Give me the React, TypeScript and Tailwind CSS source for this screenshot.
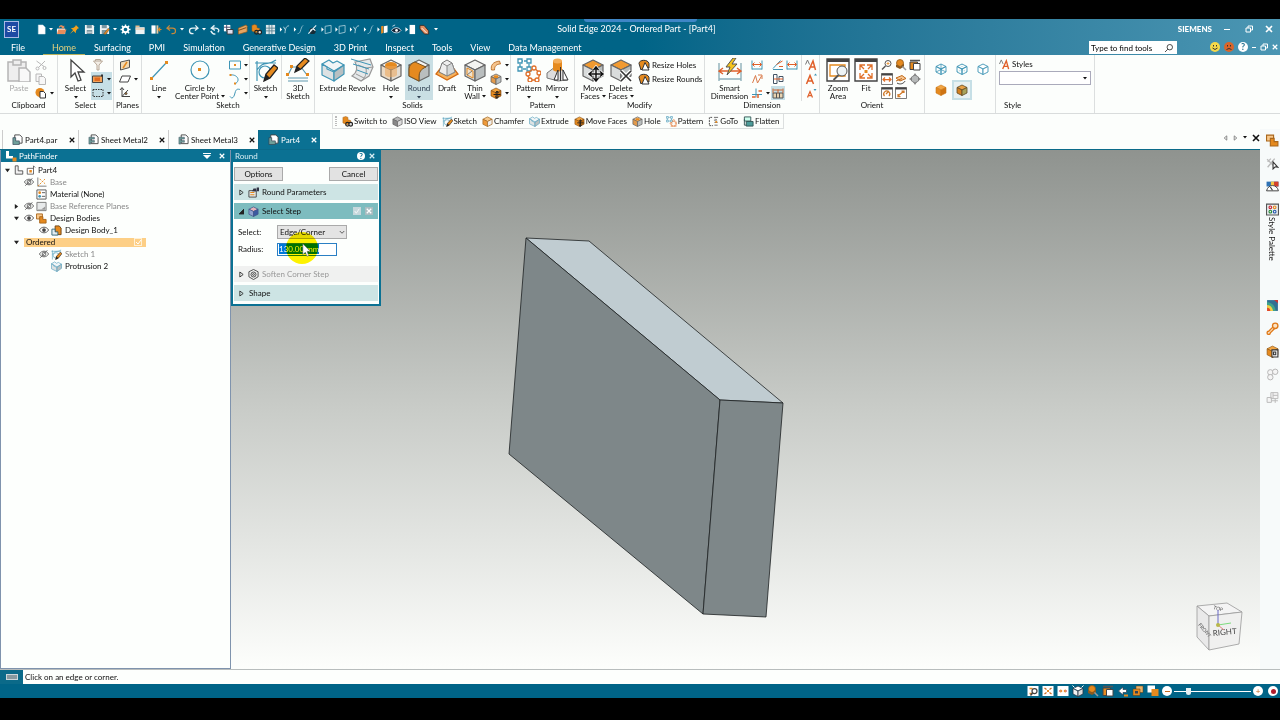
import { useState } from "react";
import type { ReactNode } from "react";

const O = "#e58a1f";
const T = "#3f95b5";
const G = "#555";

function Box({ t = "#f4f4f2", l = "#d9dcdc", r = "#b9bebe", s = "#666", w = 1.2 }: { t?: string; l?: string; r?: string; s?: string; w?: number }) {
  return (
    <g stroke={s} strokeWidth={w} strokeLinejoin="round">
      <path d="M12 2 22 7 12 12 2 7z" fill={t} />
      <path d="M2 7 12 12V23L2 18z" fill={l} />
      <path d="M22 7 12 12V23L22 18z" fill={r} />
    </g>
  );
}

const lens = <><circle cx="14" cy="9" r="6" fill="#fff" stroke={G} strokeWidth="2" /><path d="M11 9h6M14 6v6" stroke={O} strokeWidth="1.500" /><path d="M9 14 2 21" stroke={G} strokeWidth="3" /></>;
const pencil = <><path d="M10 23l2-7 8-9 4 3-8 10z" fill={O} stroke="#222" strokeWidth="1.300" /><path d="M10 23l2-7 4 4z" fill="#222" /></>;
const frame = <path d="M1 1h22v22H1z" fill="#fff" stroke="#444" strokeWidth="1.4" />;

// every drawing sits on a 24 unit square
const icons: Record<string, ReactNode> = {
  paste: <g fill="#eee" stroke="#b5b5b5" strokeWidth="1.5"><path d="M1 4h18v19H1z" /><path d="M6 2h8v5H6z" /><path d="M12 10h7l4 4v10H12z" fill="#f8f8f8" /></g>,
  cut: <g fill="none" stroke="#b8b8b8" strokeWidth="2"><path d="M3 4 18 15M20 4 7 17" /><circle cx="5" cy="19" r="3" /><circle cx="19" cy="18" r="3" /></g>,
  copy: <g fill="#f7f7f7" stroke="#b8b8b8" strokeWidth="2"><path d="M2 2h11v15H2z" /><path d="M8 7h9l4 4v12H8z" /></g>,
  clip: <><circle cx="10" cy="11" r="9" fill={O} /><path d="M10 9h7l4 4v9H10z" fill="#fff" stroke="#333" strokeWidth="2" /></>,
  arrow: <path d="M7 2v17l4-4 3 8 3-1-3-8h6z" fill="#fff" stroke="#444" strokeWidth="1.3" />,
  filter: <path d="M3 4h18l-7 8v10h-4V12zM7 4V1h10v3" fill="#f3eee6" stroke="#b7a898" strokeWidth="2" />,
  boxsel: <><path d="M1 6h20v13H1z" fill="#f3a35a" stroke="#444" strokeWidth="2" /><path d="M5 9h11v7H5z" fill="#e06a20" /><path d="M18 3h4v4h-4z" fill="#333" /></>,
  dashed: <path d="M2 5h20v14H2z" fill="none" stroke="#333" strokeWidth="2" strokeDasharray="3 2" />,
  plane: <><path d="M3 6l18-4v15L3 22z" fill="#f1d9b3" stroke="#555" strokeWidth="2" /><path d="M8 18l8-12" stroke={O} strokeWidth="3" /></>,
  plane2: <path d="M6 6h17l-5 12H1z" fill="#fff" stroke="#444" strokeWidth="2" />,
  axes: <g fill="none" stroke="#444" strokeWidth="2"><path d="M6 2v17h16M6 19 18 6M2 6l4-5 4 5" /><circle cx="14" cy="13" r="2" fill={O} /></g>,
  line: <><path d="M4 21 20 4" stroke={T} strokeWidth="1.2" /><path d="M3 19h3v3H3zM18 3h3v3h-3z" fill={O} /></>,
  circle: <><circle cx="12" cy="12" r="9" fill="none" stroke={T} strokeWidth="1.2" /><path d="M10 10h3v3h-3z" fill={O} /></>,
  rect: <><path d="M1 4h22v16H1z" fill="none" stroke={T} strokeWidth="2" /><path d="M10 10h4v4h-4z" fill={O} /></>,
  arc: <><path d="M3 4c12-2 22 10 9 18" fill="none" stroke={T} strokeWidth="2" /><path d="M1 2h4v4H1zM10 19h4v4h-4z" fill={O} /></>,
  curve: <path d="M2 19c4 6 8 2 10-7s6-8 10-7" fill="none" stroke={T} strokeWidth="2" />,
  sketch: <><path d="M3 23V3m-2 2h21M3 12C9 2 14 8 22 2" fill="none" stroke={T} strokeWidth="1.2" /><circle cx="11" cy="14" r="6" fill="none" stroke={T} strokeWidth="1.2" />{pencil}</>,
  sketch3d: <><path d="M2 17 6 9h9l6 8M2 23h20M2 20h20" fill="none" stroke="#5e98ad" strokeWidth="1.2" /><path d="M0 15h3v3H0zM4 7h3v3H4zM20 15h3v3h-3z" fill={O} /><path d="M9 14l2-6L19 0l4 3-8 8z" fill={O} stroke="#222" strokeWidth="1.2" /><path d="M9 14l2-6 4 3z" fill="#222" /></>,
  extrude: <g stroke={T} strokeWidth="1.2" strokeLinejoin="round"><path d="M1 6 8 2l4 3 4-2 7 4-10 6z" fill="#f1f5f6" /><path d="M1 6l5 3v2l7 3v9L1 17z" fill="#dde2e3" /><path d="M13 14l10-7v9l-10 7z" fill="#b8c0c2" /></g>,
  revolve: <><path d="M5 4 20 1l3 8-4 9-8 5-9-5c5-3 6-9 3-14z" fill="#e6e9ea" stroke="#999" strokeWidth="1.2" /><path d="M11 23c4-3 6-7 5-13L8 7M16 10l7-1M6 16l8 4" stroke="#999" fill="none" /><path d="M1 1l20 6M3 6l16 5M7 12l11 4" stroke={T} fill="none" /></>,
  hole: <><Box r="#e3dcd2" l="#ead9c4" /><ellipse cx="12" cy="7.5" rx="6" ry="3.4" fill={O} /><path d="M6 8v9c2 3 10 3 12 0V8" fill="#eda65a" opacity=".55" /></>,
  round: <><Box /><path d="M2 12C2 7 5 5 8 4l11 5c-5 2-7 5-7 10v4L2 18z" fill={O} stroke="#7a5420" /></>,
  draft: <><path d="M1 16l11 6 11-6-4-5H5z" fill="#f6b25d" stroke="#d46a10" strokeWidth="1.4" /><path d="M7 5l5-3 5 3 3 9-8 4-8-4z" fill="#eee" stroke="#777" /><path d="M7 5l5 3v10l8-4-3-9-5 3" stroke="#888" fill="#d5d8d8" /></>,
  thin: <><Box /><path d="M4 10l6 3v7l-6-3z" fill="#f0e3cf" stroke={O} /><path d="M4 17l5-4" stroke="#777" /></>,
  swept: <path d="M3 22c-2-9 2-16 16-18l2 6c-8 0-12 4-12 12z" fill="#f6c48c" stroke="#b0621a" strokeWidth="1.6" />,
  boxo: <><Box w={1.6} s="#666" t="#f0c694" l="#e39a4a" /><path d="M8 5h8v5H8z" fill={O} /></>,
  gizmo: <><Box t="#f3a33c" l={O} r="#c36f10" s="#7a4510" /><path d="M14 9v13M7 15h14M11 12l3-4 3 4M11 19l3 4 3-4" stroke="#222" strokeWidth="2" fill="none" /></>,
  pattern: <g fill="none" strokeWidth="1.3"><path d="M3 3h9v8H3z" stroke={T} strokeDasharray="3 1" /><path d="M1 1h4v4H1zM10 1h4v4h-4zM1 9h4v4H1zM10 9h4v4h-4z" stroke={T} fill="#fff" /><path d="M17 10l6 5-2 7h-8l-3-6z" stroke="#e0702a" /><g fill="#fff" stroke="#e0702a"><circle cx="17" cy="10" r="2" /><circle cx="22" cy="15" r="2" /><circle cx="20" cy="22" r="2" /><circle cx="13" cy="22" r="2" /><circle cx="11" cy="16" r="2" /></g></g>,
  mirror: <><path d="M2 15l8-6 8 3 4 10-9 1-11-3z" fill="#ddd" stroke="#777" /><path d="M8 3v9c2 2 7 2 9 0V3z" fill={O} /><ellipse cx="12.500" cy="3" rx="4.500" ry="2.500" fill="#f4ae5b" /><path d="M15.500 9v14M13 12 9 22h4zM18 12l5 10h-5z" fill="#fff" stroke="#333" /></>,
  move: <><Box t="#f19a31" /><path d="M15 9v14M8 16h14M12.500 12 15 9l2.500 3M12.500 20l2.500 3 2.500-3M11 13.500 8 16l3 2.500M19 13.500l3 2.500-3 2.500" stroke="#fff" strokeWidth="3" fill="none" /><path d="M15 9v14M8 16h14M12.500 12 15 9l2.500 3M12.500 20l2.500 3 2.500-3M11 13.500 8 16l3 2.500M19 13.500l3 2.500-3 2.500" stroke="#111" strokeWidth="1.5" fill="none" /></>,
  del: <><Box t="#f19a31" /><path d="M12 13l10 10M22 13 12 23" stroke="#fff" strokeWidth="4" /><path d="M12 13l10 10M22 13 12 23" stroke="#333" strokeWidth="1.6" /></>,
  resizeh: <><path d="M2 9C2 1 20 0 22 9v9l-8-4-8 8z" fill={O} stroke="#333" strokeWidth="2" /><path d="M14 7l8 15H8z" fill="#fff" stroke="#333" strokeWidth="2" /></>,
  smart: <><path d="M1 5v18M23 5v18M1 21h22" stroke="#8fb0ba" strokeWidth="1.4" /><path d="M2 13h20M5 10l-4 3 4 3M19 10l4 3-4 3" stroke="#e0602a" fill="none" strokeWidth="1.4" /><path d="M15 0 8 9h4l-3 8 10-11h-5l4-6z" fill="#f7c51e" stroke="#555" /></>,
  dim: <><path d="M2 3v18M22 3v18M2 20h20" stroke={T} strokeWidth="2" /><path d="M3 11h18M7 7l-4 4 4 4M17 7l4 4-4 4" stroke="#e0602a" fill="none" strokeWidth="2" /></>,
  angle: <><path d="M2 19 17 3M2 21h20" stroke={T} strokeWidth="2" /><path d="M9 11l12-7M14 15h8" fill="none" stroke="#e0602a" strokeWidth="2" /></>,
  dims2: <path d="M3 20 9 5l4 15 8-14M14 4h8v8" fill="none" stroke="#d97a4a" strokeWidth="2" />,
  coord: <><path d="M2 15h20M10 3v18" stroke={T} strokeWidth="2" /><path d="M2 20h7M15 8h7M14 14v8" stroke="#e0602a" strokeWidth="3" /></>,
  symd: <><path d="M3 3h7v18H3zM14 7h8v10h-8z" fill="#fff" stroke="#456" strokeWidth="2" /><path d="M4 12h18" stroke="#e0602a" strokeWidth="2" /></>,
  grid: <><path d="M2 12h20v10H2z" fill="#e8d3b0" stroke="#555" strokeWidth="2" /><path d="M2 3v9M22 3v9M12 5v7M3 6h18" stroke="#c8602a" strokeWidth="2" /><path d="M9 12v10M15 12v10" stroke="#555" strokeWidth="2" /></>,
  aa: <g fill="none" stroke="#e0602a" strokeWidth="3"><path d="M8 22l8-18 5 18M11 16h9" /><path d="M1 11 5 2l4 9" strokeWidth="2" stroke="#777" /></g>,
  a1: <><path d="M3 22 10 5l7 17M6 16h9" fill="none" stroke="#e0602a" strokeWidth="3" /><path d="M18 5l3-4 3 4z" fill={T} /></>,
  a2: <><path d="M5 21l5-12 5 12M7 17h6" fill="none" stroke="#e0602a" strokeWidth="2.500" /><path d="M17 4h6l-3 4z" fill={T} /></>,
  zoomarea: <>{frame}<path d="M1 2.500h22" stroke="#444" strokeWidth="3" /><path d="M4 7h15v11H4z" fill="none" stroke={O} strokeWidth="1.300" /><circle cx="16" cy="13" r="5" fill="#eef4f6" stroke="#555" /><path d="M12.500 17l-5 5" stroke="#555" strokeWidth="1.800" /></>,
  fit: <>{frame}<path d="M1 2.500h22" stroke="#444" strokeWidth="3" /><path d="M6 12V7h5M18 12V7h-5M6 15v5h5M18 15v5h-5M6 7l4 4M18 7l-4 4M6 20l4-4M18 20l-4-4" fill="none" stroke="#e0702a" strokeWidth="1.300" /><path d="M10.500 12h3v3h-3z" fill={O} /></>,
  lens,
  fitsmall: <>{frame}<path d="M1 3h22" stroke="#444" strokeWidth="4" /><path d="M4 13h16M8 9l-4 4 4 4M16 9l4 4-4 4" stroke="#e0702a" strokeWidth="2.500" fill="none" /></>,
  rotwin: <>{frame}<path d="M1 3h22" stroke="#444" strokeWidth="4" /><path d="M7 18a6 6 0 1 1 9 0M10 14l6-6" fill="none" stroke="#d07a2a" strokeWidth="2.500" /></>,
  diag: <>{frame}<path d="M1 3h22" stroke="#444" strokeWidth="4" /><path d="M6 18 18 8M6 14v5h5M13 8h5v4" fill="none" stroke="#d07a2a" strokeWidth="2.500" /></>,
  boxes: <><circle cx="10" cy="8" r="7" fill={O} stroke="#8d5517" strokeWidth="1.500" /><path d="M2 11l9 4 7-6v6l-8 5-8-4z" fill="#8a5a20" /><path d="M15 15l7 7" stroke="#999" strokeWidth="3" /></>,
  pages: <><path d="M2 6h15v15H2z" fill={O} stroke="#444" strokeWidth="2" /><path d="M9 9h13v13H9z" fill="#fff" stroke="#444" strokeWidth="2" /><path d="M2 3h20" stroke="#555" strokeWidth="3" /></>,
  pan: <><path d="M2 10l12-5 8 6-12 5zM2 16l12-5" fill="#f7c794" stroke="#c06a1c" strokeWidth="2" /><path d="M4 20c6 4 14 1 16-4" fill="none" stroke="#444" strokeWidth="2" /></>,
  cross: <><path d="M12 0l4 6h-8zM12 24l4-6h-8zM0 12l6-4v8zM24 12l-6-4v8z" fill="#888" /><path d="M12 4l7 4v8l-7 4-7-4V8z" fill="#b5b8b8" stroke="#777" strokeWidth="1.500" /></>,
  wire: <><Box t="none" l="none" r="none" s={T} w={1.8} /><path d="M2 18l10-5 10 5M12 2v11" stroke={T} strokeWidth="1.600" /></>,
  wire1: <><Box t="none" l="none" r="none" s={T} w={1.8} /><path d="M2 18l10-5 10 5M12 2v11" stroke={T} strokeDasharray="2 2" /></>,
  wire2: <Box t="#fff" l="#fff" r="#fff" s={T} w={1.8} />,
  solid: <Box t="#f2a543" l={O} r="#cf7412" s="#c97717" />,
  shaded: <Box t="#e8a045" l="#d48020" r="#a9a35a" s="#5f4a24" w={1.6} />,
  chamfer: <Box t="#f6c88a" l="#ef9a3a" r="#eee" s="#a56a24" w={1.6} />,
  grey: <Box t="#bbb" l="#888" r="#ddd" s="#666" w={1.6} />,
  select: <Box t="#e6b3ba" l="#8fa2cf" r="#3b5aa0" s="#43568a" w={1.6} />,
  goto: <><path d="M9 3H3v18h8" fill="none" stroke="#444" strokeWidth="2" strokeDasharray="4 2" /><path d="M13 3h9M13 9h6l-3-3M14 14h7M14 20h7" stroke="#666" strokeWidth="2" /><path d="M16 11h4v4h-4z" fill={O} /></>,
  flatten: <g stroke="#355" strokeWidth="2"><path d="M3 2h14v9H3z" fill="#cfe" /><path d="M7 12h15v10H7z" fill="#4d9d9a" /><path d="M3 7v13h4" fill="none" /></g>,
  doc: <path d="M5 2h10l5 5v15H5z" fill="#fff" stroke="#d7e3e8" />,
  open: <><path d="M2 10h18v12H2z" fill="#fff" /><path d="M5 12h18l-4 10H2z" fill="#e78d5c" /><path d="M6 7C8 1 14 2 16 5l2-2v7h-7l2-3c-3-2-5-1-5 1z" fill="#e78d5c" /></>,
  pin: <path d="M15 2l7 7-3 1-4 5v5l-5-5-8 7 7-9-5-4 6-1 4-3z" fill="#f3a11c" />,
  save: <><path d="M2 2h18l2 3v17H2z" fill="#eef3f4" /><path d="M6 2h11v7H6zM6 13h12v9H6z" fill="#7a97a2" /><path d="M7 15h10v1H7zM7 18h10v1H7z" fill="#fff" /></>,
  saveas: <><path d="M2 2h18l2 3v17H2z" fill="#eef3f4" /><path d="M6 2h11v7H6zM6 13h12v9H6z" fill="#7a97a2" /><path d="M10 22 20 9l3 3-9 11z" fill={O} stroke="#543" /></>,
  gear: <g stroke="#fff" fill="none"><circle cx="12" cy="12" r="6" strokeWidth="4" /><path d="M12 1v5M12 18v5M1 12h5M18 12h5M4 4l4 4M16 16l4 4M20 4l-4 4M8 16l-4 4" strokeWidth="3" /></g>,
  win: <><path d="M1 7h20v15H1z" fill="#eef3f4" /><path d="M1 3h9v4H1zM1 10h20v2H1z" fill="#e8b98a" /></>,
  panel: <><path d="M1 3h9v18H1z" fill="#fff" /><path d="M12 3h4v18h-4z" fill="#e9c59a" /><path d="M23 12h-6m3-4-4 4 4 4" stroke={O} strokeWidth="2.500" fill="none" /></>,
  undo: <path d="M8 3 2 9l7 5M3 9h11c9 0 9 12 0 12h-2" fill="none" stroke="#c98a3b" strokeWidth="2.500" />,
  redo: <path d="M16 3l6 6-7 5M21 9H10C1 9 1 21 10 21h2" fill="none" stroke="#e8f2f5" strokeWidth="2.800" />,
  sync: <path d="M12 3 5 9l8 5M6 9h8c8 0 9 6 5 9M4 15c2 5 6 7 10 7" fill="none" stroke="#dfeef3" strokeWidth="3" />,
  table: <><path d="M2 2h14v14H2z" fill="#fff" /><path d="M2 7h14M8 2v14" stroke="#446" strokeWidth="2" /><path d="M9 12h13v10H9z" fill="#dde" stroke="#333" strokeWidth="2" /></>,
  sheet: <><path d="M3 9l17-7 2 3v12L5 22H3z" fill="#e5a663" stroke="#a45c12" strokeWidth="1.500" /><path d="M3 14 20 8" stroke="#7c4510" strokeWidth="2" /></>,
  link: <><path d="M2 3l6-2 5 2v5l6 2v6l-8 3-9-4z" fill={O} stroke="#9a5a18" /><circle cx="12" cy="18" r="4" fill="none" stroke="#222" strokeWidth="2.500" /><circle cx="19" cy="18" r="4" fill="#ddd" stroke="#222" strokeWidth="2.500" /></>,
  cells: <><path d="M2 2h20v20H2z" fill="#dfe9ec" /><path d="M2 9h20M2 15h20M9 2v20M15 2v20" stroke="#5b8494" strokeWidth="2" /></>,
  tri: <><path d="M2 7l5 5-5 5z" fill="#fff" /><path d="M22 4c-6 0-8 5-9 16M10 6l3 6" stroke="#cfe3ea" strokeWidth="1.800" fill="none" /></>,
  slope: <><path d="M2 7l5 5-5 5z" fill="#fff" /><path d="M22 3c-3 2-5 9-6 13-1 3-3 5-6 5" stroke="#9cc6d4" strokeWidth="1.800" fill="none" /></>,
  plane3: <><path d="M1 7l5 5-5 5z" fill="#fff" /><path d="M9 5l13-2v15L9 21z" fill="none" stroke="#9cc6d4" strokeWidth="2" /></>,
  planeo: <><path d="M1 7l5 5-5 5z" fill="#fff" /><path d="M9 5l5-1v15l-5 2z" fill={O} /><path d="M15 5l8-2v15l-8 2z" fill="#fff" /></>,
  slash: <><circle cx="12" cy="15" r="7" fill="#162b36" /><path d="M3 21 20 3M7 15c3-5 9-5 11 0" stroke="#dfeef3" strokeWidth="2.500" fill="none" /></>,
  eyed: <><path d="M1 14c5-8 16-8 21 0-5 7-16 7-21 0z" fill="#123" stroke="#cde" strokeWidth="2" /><circle cx="12" cy="14" r="3" fill="#fff" /><path d="M3 5l6-3" stroke="#cde" strokeWidth="2" /></>,
  page: <><path d="M1 7l6 5-6 5z" fill="#fff" /><path d="M10 2h12v20H10z" fill="#fff" /></>,
  fold: <><path d="M2 3h9l10 12v7h-9L2 11z" fill="#e28f62" stroke="#40302a" strokeWidth="2" /><path d="M6 9l11 11" stroke="#fff" strokeWidth="2" /></>,
  partdoc: <><path d="M6 2h11l5 5v13H6z" fill="#fff" stroke="#444" strokeWidth="2" /><path d="M2 8h6v7h8v8H2z" fill="#6f9f9a" stroke="#345" strokeWidth="1.500" /></>,
  sheetdoc: <><path d="M7 2h10l5 5v14H7z" fill="#fff" stroke="#444" strokeWidth="2" /><path d="M2 7h12v4H6v3h8v4H6v4H2z" fill="#6f9f9a" stroke="#345" /></>,
  lpart: <path d="M3 2h7v12h11v8H3z" fill="#f2f2f2" stroke="#444" strokeWidth="2" />,
  docup: <><path d="M3 8h15v14H3z" fill="#fff" stroke="#555" strokeWidth="2" /><path d="M8 12h6v6H8z" fill={O} /><path d="M18 9V2l4 4" stroke="#555" strokeWidth="2" fill="none" /></>,
  pathicon: <><path d="M2 2h6v10h8v5H2z" fill="#fff" /><path d="M15 15h8v8h-8z" fill={O} /></>,
  eye: <><path d="M1 12c5-9 17-9 22 0-5 9-17 9-22 0z" fill="#fff" stroke="#444" strokeWidth="2" /><circle cx="12" cy="12" r="4.500" fill="#444" /></>,
  eyeoff: <g fill="none" stroke="#555" strokeWidth="2"><path d="M1 12c5-9 17-9 22 0-5 9-17 9-22 0zM3 21 20 3" /><circle cx="12" cy="12" r="4.500" /></g>,
  base: <><path d="M4 1v19h19" fill="none" stroke="#777" strokeWidth="2" /><path d="M4 20 20 4M8 4l5 5M17 12l4 4" stroke={O} strokeWidth="2" strokeDasharray="4 2" /></>,
  material: <><path d="M2 2h20v20H2z" fill="#fff" stroke="#555" strokeWidth="2" /><circle cx="8" cy="8" r="3" fill={O} /><circle cx="8" cy="16" r="3" fill={T} /><path d="M13 8h7M13 16h7" stroke="#555" strokeWidth="2" /></>,
  refplane: <><path d="M2 3h20v18H2z" fill="#e7eaea" stroke="#777" strokeWidth="2" /><path d="M4 18h8l8-6v7H4z" fill="#999" /></>,
  bodies: <><path d="M1 2h13v11H1z" fill="#f7c78a" stroke="#a9661b" strokeWidth="2" /><path d="M8 8h7v6h7v8H8z" fill={O} stroke="#a9661b" strokeWidth="2" /></>,
  body: <><path d="M9 2h9l4 5v14H9z" fill={O} stroke="#6c4312" strokeWidth="2" /><path d="M2 9h7v6h6v7H2z" fill="#e3edf2" stroke="#367" strokeWidth="2" /></>,
  params: <><path d="M2 8h16v14H2z" fill="#e5eaea" stroke="#444" strokeWidth="2" /><path d="M5 12h9M5 17h9" stroke={O} strokeWidth="2.500" /><path d="M9 9l3-6h6v7zM19 1h5v8h-5z" fill="#334" /></>,
  soften: <g fill="none" stroke="#333" strokeWidth="1.800"><path d="M12 1l10 5v11l-10 6-10-6V6z" /><circle cx="12" cy="12" r="5.500" /><circle cx="12" cy="12" r="2" /></g>,
  tools: <g fill="none" stroke="#bbb" strokeWidth="2.500"><path d="M2 4l14 14M16 3 3 19M3 9l6-6" /><path d="M13 9v13l4-4 5 1z" fill="#fff" stroke="#333" strokeWidth="2" /></g>,
  gauge: <><path d="M1 3h22v9H1z" fill="#2f72b5" /><path d="M9 3h6v9H9z" fill="#f3c343" /><path d="M15 3h8v9h-8z" fill="#d6402a" /><path d="M1 20c3-13 19-13 22 0z" fill="#fff" stroke="#444" strokeWidth="1.800" /><path d="M12 19 8 13" stroke="#333" strokeWidth="2" /></>,
  palette: <><path d="M1 2h22v20H1z" fill="#e9eef0" stroke="#555" strokeWidth="2" /><g fill="none" strokeWidth="2"><circle cx="8" cy="8" r="2.500" stroke="#c23" /><circle cx="16" cy="8" r="2.500" stroke={O} /><circle cx="8" cy="16" r="2.500" stroke="#283" /><circle cx="16" cy="16" r="2.500" stroke="#25a" /></g></>,
  rainbow: <><path d="M2 2h20v20H2z" fill="#2f6f94" /><path d="M2 6c9 0 15 7 16 16H2z" fill="#3da38a" /><path d="M2 11c6 0 10 5 11 11H2z" fill="#f3cf45" /><path d="M2 16c4 0 6 3 6 6H2z" fill="#e24a2a" /><path d="M15 2h7v6z" fill="#c33" /></>,
  wrench: <><path d="M13 9 5 17a3 3 0 1 0 3 3l8-8" fill="#fbe3c4" stroke="#e07a1a" strokeWidth="2.500" /><circle cx="17" cy="7" r="5" fill="#fbe3c4" stroke="#e07a1a" strokeWidth="2.500" /></>,
  boxdoc: <><Box t="#f2a543" l={O} r="#cf7412" s="#8d5517" /><path d="M11 9h11v13H11z" fill="#fff" stroke="#333" strokeWidth="2" /><path d="M14 13h4v5h-4z" fill="none" stroke="#333" strokeWidth="2" /></>,
  circles: <g fill="#f5f5f5" stroke="#b5b5b5" strokeWidth="1.800"><circle cx="8" cy="8" r="5" /><circle cx="17" cy="7" r="5" /><circle cx="8" cy="17" r="5" /></g>,
  greydoc: <path d="M2 12h8v9H2zM9 3h13v11H9zM13 3v11M13 8h9M17 14v8M10 18h12" fill="#f5f5f5" stroke="#bbb" strokeWidth="1.800" />,
  wlens: <><path d="M1 2h22v20H1z" fill="#fff" /><path d="M5 7h6M5 17h6" stroke={O} strokeWidth="3" /><circle cx="15" cy="12" r="5" fill="#fff" stroke="#444" strokeWidth="2.500" /><path d="M11 16l-4 5" stroke="#444" strokeWidth="3" /></>,
  wfit: <><path d="M1 2h22v20H1z" fill="#fff" /><path d="M5 6l4 3M19 6l-4 3M5 18l4-3M19 18l-4-3" stroke="#c96a20" strokeWidth="2.500" /><path d="M10 10h4v4h-4z" fill={O} /></>,
  wdim: <><path d="M1 2h22v20H1z" fill="#fff" /><path d="M4 12h5M15 12h5" stroke="#c23" strokeWidth="2" /><path d="M7 8l4 4-4 4zM17 8l-4 4 4 4z" fill={O} /></>,
  wcube: <><Box t="#fff" l="#f2f2f2" r="#ddd" s="#234" w={1.6} /><path d="M1 1l4 4M23 1l-4 4" stroke="#fff" strokeWidth="2" /></>,
  back: <><path d="M12 4 3 12l9 8v-5h7V9h-7z" fill="#fff" stroke="#345" strokeWidth="1.500" /><path d="M14 21h8" stroke={O} strokeWidth="4" /></>,
  stack1: <><path d="M8 2h14v13H8z" fill="#e9b26a" stroke="#5f3b10" /><path d="M2 8h14v13H2z" fill={O} stroke="#5f3b10" /><path d="M6 12h6v5H6z" fill="#345" /></>,
  stack2: <><path d="M1 1h15v14H1z" fill="#fff" /><path d="M9 8h14v14H9z" fill={O} /></>,
};

function Ico({ n, className = "size-[11px]" }: { n: string; className?: string }) {
  return <svg viewBox="0 0 24 24" className={`shrink-0 ${className}`} fill="none" aria-hidden="true">{icons[n]}</svg>;
}

function Caret({ className = "" }: { className?: string }) {
  return <svg viewBox="0 0 4 3" className={`h-[3px] w-1 shrink-0 ${className}`} aria-hidden="true"><path d="M0 0h4L2 2.500z" fill="currentColor" /></svg>;
}

function Close({ className = "size-[6px]" }: { className?: string }) {
  return <svg viewBox="0 0 8 8" className={`shrink-0 ${className}`} aria-hidden="true"><path d="M1 1l6 6M7 1 1 7" stroke="currentColor" strokeWidth="1.600" /></svg>;
}

function Restore() {
  return <svg viewBox="0 0 8 8" className="size-2" fill="none" stroke="currentColor" aria-hidden="true"><path d="M1 3h4.500v4H1zM3 3V1h4.500v4H6" /></svg>;
}

interface BigProps { icon: string; label: string; label2?: string; caret?: boolean; inline?: boolean; width?: string; active?: boolean; muted?: boolean }

function Big({ icon, label, label2, caret, inline, width = "w-7", active, muted }: BigProps) {
  return (
    <button type="button" className={`flex h-[45px] shrink-0 flex-col items-center pt-[3px] ${width} ${active ? "bg-[#c9dfe4] text-[#345]" : ""} ${muted ? "text-[#aaa]" : ""}`}>
      <Ico n={icon} className="size-6" />
      <span className="mt-[2px] whitespace-nowrap leading-2">{label}</span>
      {label2 && <span className="flex items-center gap-[2px] whitespace-nowrap leading-2">{label2}{inline && <Caret />}</span>}
      {caret && <Caret className="mt-1" />}
    </button>
  );
}

function Small({ icon, caret, active, label, title }: { icon: string; caret?: boolean; active?: boolean; label?: string; title?: string }) {
  return (
    <button type="button" aria-label={label ?? title ?? icon} className={`flex h-[14px] items-center gap-[2px] whitespace-nowrap px-[1px] ${active ? "bg-[#c6dfe6]" : ""}`}>
      <Ico n={icon} className="size-3" />
      {label}
      {caret && <Caret className="ml-[1px]" />}
    </button>
  );
}

function Group({ name, width, children }: { name: string; width: string; children: ReactNode }) {
  return (
    <section className={`flex shrink-0 flex-col border-r border-[#dcdfdf] ${width}`}>
      <div className="flex h-[46px]">{children}</div>
      <h2 className="text-center leading-2">{name}</h2>
    </section>
  );
}

const Col = ({ children, className = "" }: { children: ReactNode; className?: string }) => <div className={`flex flex-col items-start pt-[3px] ${className}`}>{children}</div>;

const quick: [string, string][] = [
  ["doc", "w-3"], ["caret", "w-2"], ["open", "w-3"], ["pin", "w-[14px]"], ["save", "w-4"], ["saveas", "w-[14px]"], ["caret", "w-2"], ["gear", "w-3"],
  ["win", "w-[18px]"], ["panel", "w-[14px]"], ["undo", "w-4"], ["caret", "w-[6px]"], ["redo", "w-4"], ["caret", "w-[6px]"], ["sync", "w-[14px]"],
  ["table", "w-[14px]"], ["sheet", "w-[14px]"], ["link", "w-[14px]"], ["cells", "w-[14px]"], ["tri", "w-[14px]"], ["slope", "w-[14px]"], ["slash", "w-[14px]"],
  ["plane3", "w-[14px]"], ["plane3", "w-[14px]"], ["tri", "w-[14px]"], ["slope", "w-[14px]"], ["planeo", "w-[14px]"], ["eyed", "w-[14px]"], ["page", "w-[14px]"], ["fold", "w-[14px]"], ["caret", "w-[10px]"],
];

const menus = ["Home", "Surfacing", "PMI", "Simulation", "Generative Design", "3D Print", "Inspect", "Tools", "View", "Data Management"];

function Header() {
  return (
    <header className="relative h-9 shrink-0 bg-linear-to-r from-[#006487] from-50% to-[#4b96b3] text-[9px] text-white">
      <div className="absolute left-1/2 top-0 h-[3px] w-[113px] -translate-x-14 rounded-b bg-[#3f86c6]" />
      <div className="flex h-5 items-center">
        <div className="flex flex-1 items-center">
          <div className="ml-1 mr-4 flex w-[15px] items-center justify-center border border-[#a9b9e4] bg-[#1d4aa4] py-[2px] text-[8px] font-bold leading-[11px]">SE</div>
          {quick.map(([n, w], i) => (
            <button key={i} type="button" aria-label={n} className={`flex items-center justify-center ${w}`}>{n === "caret" ? <Caret /> : <Ico n={n} />}</button>
          ))}
        </div>
        <h1 className="text-center">Solid Edge 2024 - Ordered Part - [Part4]</h1>
        <div className="flex flex-1 items-center justify-end gap-3 pr-[7px]">
          <span className="text-[8px] font-black">SIEMENS</span>
          <button type="button" aria-label="Minimize" className="h-[1px] w-[6px] bg-white" />
          <button type="button" aria-label="Restore" className="ml-[3px]"><Restore /></button>
          <button type="button" aria-label="Close"><Close className="size-2" /></button>
        </div>
      </div>
      <nav className="flex h-4 items-end">
        <button type="button" className="h-[14px] w-9 text-center">File</button>
        {menus.map((m) => (
          <button key={m} type="button" className={`h-[14px] whitespace-nowrap px-[9px] ${m === "Home" ? "ml-[7px] border-b border-[#b9b25c] text-[#e6d27e]" : ""}`}>{m}</button>
        ))}
        <div className="flex-1" />
        <label className="mb-[1px] mr-[33px] flex h-[13px] w-[88px] items-center bg-white pr-1 text-black">
          <input aria-label="Type to find tools" placeholder="Type to find tools" className="w-full min-w-0 bg-transparent pl-[2px] text-[8px] outline-none placeholder:text-black" />
          <svg viewBox="0 0 10 10" className="size-2 shrink-0" fill="none" stroke="#222" aria-hidden="true"><circle cx="6" cy="4" r="3.400" /><path d="M3.500 6.500 0 10" /></svg>
        </label>
        <div className="flex h-4 items-center gap-1 pr-[2px]">
          {["#f4d84a", "#d9652a"].map((c, i) => (
            <button key={c} type="button" aria-label={i ? "Report a problem" : "Send a smile"}>
              <svg viewBox="0 0 10 10" className="size-[10px]" aria-hidden="true"><circle cx="5" cy="5" r="5" fill={c} /><path d={i ? "M2.500 7.500q2.500-2 5 0" : "M2.500 6q2.500 3 5 0"} fill="none" stroke="#333" /><path d="M3 3h1v1.500H3zM6 3h1v1.500H6z" fill="#333" /></svg>
            </button>
          ))}
          <button type="button" aria-label="Help" className="flex size-[10px] items-center justify-center rounded-full bg-white font-bold text-[#27718f]">?</button>
          <button type="button" aria-label="Minimize part" className="h-[1px] w-1 bg-white" />
          <button type="button" aria-label="Restore part"><Restore /></button>
          <button type="button" aria-label="Close part"><Close /></button>
        </div>
      </nav>
    </header>
  );
}

function Ribbon() {
  return (
    <div className="flex h-[59px] shrink-0 overflow-hidden border-b border-[#d9dcdc] bg-[#fcfefc]">
      <Group name="Clipboard" width="w-[58px]">
        <Big icon="paste" label="Paste" width="w-[34px] pl-1" muted />
        <Col><Small icon="cut" /><Small icon="copy" /><Small icon="clip" caret /></Col>
      </Group>
      <Group name="Select" width="w-14">
        <Big icon="arrow" label="Select" caret width="w-[33px] pl-[2px]" />
        <Col><Small icon="filter" /><Small icon="boxsel" caret active /><Small icon="dashed" caret active /></Col>
      </Group>
      <Group name="Planes" width="w-7">
        <Col className="pl-1"><Small icon="plane" /><Small icon="plane2" caret /><Small icon="axes" /></Col>
      </Group>
      <Group name="Sketch" width="w-[173px]">
        <Big icon="line" label="Line" caret width="w-[34px]" />
        <Big icon="circle" label="Circle by" label2="Center Point" inline width="w-[48px]" />
        <Col className="w-[26px] pl-1"><Small icon="rect" caret /><Small icon="arc" caret /><Small icon="curve" caret /></Col>
        <div className="h-11 border-r border-[#dcdfdf]" />
        <Big icon="sketch" label="Sketch" caret width="w-[31px]" />
        <div className="h-11 border-r border-[#dcdfdf]" />
        <Big icon="sketch3d" label="3D" label2="Sketch" width="w-8" />
      </Group>
      <Group name="Solids" width="w-[196px]">
        <Big icon="extrude" label="Extrude" width="ml-1 w-7" />
        <Big icon="revolve" label="Revolve" width="w-[30px]" />
        <Big icon="hole" label="Hole" caret />
        <Big icon="round" label="Round" caret active />
        <Big icon="draft" label="Draft" />
        <Big icon="thin" label="Thin" label2="Wall" inline />
        <Col><Small icon="swept" caret /><Small icon="boxo" caret /><Small icon="gizmo" caret /></Col>
      </Group>
      <Group name="Pattern" width="w-16">
        <Big icon="pattern" label="Pattern" caret width="ml-1 w-7" />
        <Big icon="mirror" label="Mirror" caret />
      </Group>
      <Group name="Modify" width="w-[130px]">
        <Big icon="move" label="Move" label2="Faces" inline width="ml-1 w-7" />
        <Big icon="del" label="Delete" label2="Faces" inline />
        <Col className="pl-[2px]"><Small icon="resizeh" label="Resize Holes" /><Small icon="resizeh" label="Resize Rounds" /></Col>
      </Group>
      <Group name="Dimension" width="w-[115px]">
        <Big icon="smart" label="Smart" label2="Dimension" width="w-[45px] pl-1" />
        <Col className="w-[21px]"><Small icon="dim" /><Small icon="dims2" /><Small icon="coord" caret /></Col>
        <Col><Small icon="angle" /><Small icon="symd" /><Small icon="grid" active /></Col>
        <Col className="border-r border-[#dcdfdf] pr-[2px]"><Small icon="dim" /></Col>
        <Col className="pl-[2px]"><Small icon="aa" /><Small icon="a1" /><Small icon="a2" /></Col>
      </Group>
      <Group name="Orient" width="w-[105px]">
        <Big icon="zoomarea" label="Zoom" label2="Area" width="ml-1 w-7" />
        <Big icon="fit" label="Fit" />
        <Col><Small icon="lens" /><Small icon="fitsmall" /><Small icon="rotwin" /></Col>
        <Col><Small icon="boxes" /><Small icon="pan" /><Small icon="diag" /></Col>
        <Col><Small icon="pages" /><Small icon="cross" /></Col>
      </Group>
      <Group name="" width="w-[71px]">
        <div className="grid w-full grid-cols-3 place-items-center pl-[5px] pr-[1px] pt-[3px]">
          {["wire", "wire1", "wire2", "solid", "shaded"].map((n, i) => (
            <button key={i} type="button" aria-label={`View style ${i + 1}`} className={`flex size-5 items-center justify-center ${n === "shaded" ? "border-2 border-[#c6dfe6] bg-[#e9f1f2]" : ""}`}><Ico n={n} className="size-3" /></button>
          ))}
        </div>
      </Group>
      <section className="flex w-[99px] flex-col border-r border-[#dcdfdf] px-[3px]">
        <label htmlFor="style" className="flex h-4 items-center gap-[2px] pt-[2px]"><Ico n="aa" />Styles</label>
        <span className="flex h-[30px] items-start">
          <span className="relative flex w-full items-center">
            <select id="style" className="h-[14px] w-full appearance-none border border-[#aab] bg-white"><option></option></select>
            <Caret className="pointer-events-none absolute right-1" />
          </span>
        </span>
        <h2 className="pl-[5px] leading-2">Style</h2>
      </section>
    </div>
  );
}

const commands: [string, string][] = [
  ["link", "Switch to"], ["grey", "ISO View"], ["sketch", "Sketch"], ["chamfer", "Chamfer"], ["extrude", "Extrude"], ["gizmo", "Move Faces"], ["boxo", "Hole"], ["pattern", "Pattern"], ["goto", "GoTo"], ["flatten", "Flatten"],
];

function Commands() {
  return (
    <div className="flex h-4 shrink-0 items-start bg-[#fcfefc] pl-[332px]">
      <div className="flex h-[15px] items-center gap-[5px] border border-t-0 border-[#dcdfdf] pr-1">
        <span className="ml-[2px] h-[10px] w-[2px] border-x border-dotted border-[#bbb]" />
        {commands.map(([n, t]) => <button key={t} type="button" className="flex items-center gap-[1px] whitespace-nowrap"><Ico n={n} />{t}</button>)}
      </div>
    </div>
  );
}

function DocTabs() {
  const [active, setActive] = useState("Part4");
  const docs: [string, string][] = [["Part4.par", "w-[76px]"], ["Sheet Metal2", "w-[90px]"], ["Sheet Metal3", "w-[90px]"], ["Part4", "w-[62px]"]];
  return (
    <div className="flex h-5 shrink-0 items-stretch border-b border-[#0b6a89] bg-[#fcfefc] pl-[2px]">
      {docs.map(([name, w]) => (
        <div key={name} className={`flex items-center gap-[2px] border-l pl-[9px] pr-[3px] ${w} ${active === name ? "border-[#0b6a89] bg-[#0b7193] text-white" : "border-[#ccc]"}`}>
          <button type="button" onClick={() => setActive(name)} className="flex flex-1 items-center gap-[2px] whitespace-nowrap"><Ico n={name.startsWith("Sheet") ? "sheetdoc" : "partdoc"} />{name}</button>
          <button type="button" aria-label={`Close ${name}`}><Close /></button>
        </div>
      ))}
      <div className="flex flex-1 items-center justify-end gap-[5px] pb-1">
        <svg viewBox="0 0 5 7" className="h-[6px] w-[5px]" aria-hidden="true"><path d="M4 1v5L1 3.500z" fill="none" stroke="#777" /></svg>
        <svg viewBox="0 0 5 7" className="h-[6px] w-[5px]" aria-hidden="true"><path d="M1 1v5l3-2.500z" fill="none" stroke="#777" /></svg>
        <Caret />
        <Close className="size-2" />
      </div>
    </div>
  );
}

interface Node { text: string; icon: string; eye?: string; arrow?: "open" | "shut"; deep?: boolean; dim?: boolean }

const nodes: Node[] = [
  { text: "Base", icon: "base", eye: "eyeoff", dim: true },
  { text: "Material (None)", icon: "material" },
  { text: "Base Reference Planes", icon: "refplane", eye: "eyeoff", arrow: "shut", dim: true },
  { text: "Design Bodies", icon: "bodies", eye: "eye", arrow: "open" },
  { text: "Design Body_1", icon: "body", eye: "eye", deep: true },
];

const history: Node[] = [
  { text: "Sketch 1", icon: "sketch", eye: "eyeoff", deep: true, dim: true },
  { text: "Protrusion 2", icon: "extrude", deep: true },
];

function Twist({ dir }: { dir?: "open" | "shut" }) {
  return <svg viewBox="0 0 6 6" className="size-[5px] shrink-0" aria-hidden="true">{dir && <path d={dir === "open" ? "M0 1h6L3 5z" : "M1 0v6l4-3z"} fill="#222" />}</svg>;
}

function TreeRow({ node }: { node: Node }) {
  return (
    <li className={`flex h-3 items-center whitespace-nowrap ${node.deep ? "pl-[28px]" : "pl-[13px]"} ${node.dim ? "text-[#888]" : ""}`}>
      <Twist dir={node.arrow} />
      <span className="ml-[5px] flex w-3">{node.eye && <Ico n={node.eye} className="size-[10px]" />}</span>
      <Ico n={node.icon} />
      <span className="ml-[3px]">{node.text}</span>
    </li>
  );
}

function PathFinder() {
  return (
    <aside className="flex w-[231px] shrink-0 flex-col border-x border-b border-[#7f93ad] bg-[#fdfffd]">
      <div className="flex h-3 items-center bg-[#0b7193] pl-1 pr-[5px] text-white">
        <Ico n="pathicon" className="size-3" />
        <h2 className="ml-[2px] flex-1">PathFinder</h2>
        <svg viewBox="0 0 8 6" className="mr-2 h-[6px] w-2" aria-hidden="true"><path d="M0 .5h8" stroke="#fff" /><path d="M0 2h8L4 6z" fill="#fff" /></svg>
        <button type="button" aria-label="Close PathFinder"><Close /></button>
      </div>
      <ul className="pt-[2px]">
        <li className="flex h-3 items-center pl-1"><Twist dir="open" /><Ico n="lpart" className="ml-1 size-[10px]" /><Ico n="docup" className="ml-[2px] size-[10px]" /><span className="ml-[2px]">Part4</span></li>
        {nodes.map((n) => <TreeRow key={n.text} node={n} />)}
        <li className="flex h-3 items-center pl-[13px]">
          <Twist dir="open" />
          <label className="ml-[5px] flex h-[9px] w-[122px] items-center justify-between bg-[#fdcf86] pl-[2px] pr-1">Ordered
            <span className="relative flex">
              <input type="checkbox" defaultChecked className="peer size-2 appearance-none border border-[#fff0d4]" />
              <svg viewBox="0 0 8 8" className="pointer-events-none absolute inset-0 hidden size-2 peer-checked:block" aria-hidden="true"><path d="M2 4l2 2 3-4" fill="none" stroke="#fff" /></svg>
            </span>
          </label>
        </li>
        {history.map((n) => <TreeRow key={n.text} node={n} />)}
      </ul>
    </aside>
  );
}

function Step({ icon, text, tone, open, children }: { icon?: string; text: string; tone: string; open?: boolean; children?: ReactNode }) {
  return (
    <div className={`flex h-4 items-center gap-1 px-[5px] ${tone}`}>
      <button type="button" className="flex flex-1 items-center gap-1">
        <svg viewBox="0 0 6 8" className="h-[7px] w-[5px]" aria-hidden="true"><path d={open ? "M6 1v6H0z" : "M1 1v6l4-3z"} fill={open ? "#222" : "none"} stroke="#222" /></svg>
        {icon && <Ico n={icon} />}
        <span className={icon ? "-ml-[1px]" : "ml-[1px]"}>{text}</span>
      </button>
      {children}
    </div>
  );
}

function RoundPanel() {
  return (
    <section className="absolute left-0 top-0 w-[150px] border-x-2 border-b-2 border-[#0b7193] bg-[#fdfffd] pb-[3px]">
      <div className="flex h-3 items-center gap-1 bg-[#0b7193] px-[2px] text-[#d8edf3]">
        <h2 className="flex-1">Round</h2>
        <button type="button" aria-label="Help" className="flex size-2 items-center justify-center rounded-full bg-white font-bold text-[#0b7193]">?</button>
        <button type="button" aria-label="Close" className="mr-[2px]"><Close /></button>
      </div>
      <div className="flex flex-col gap-[3px] px-[1px] pt-[5px]">
        <div className="flex justify-between">
          <button type="button" className="h-[14px] w-[49px] border border-[#aaa] bg-[#e2e2e2]">Options</button>
          <button type="button" className="h-[14px] w-[49px] border border-[#aaa] bg-[#e2e2e2]">Cancel</button>
        </div>
        <Step icon="params" text="Round Parameters" tone="bg-[#cde4e4]" />
        <Step icon="select" text="Select Step" tone="bg-[#7dbcbf]" open>
          <button type="button" aria-label="Accept" className="flex size-2 items-center justify-center bg-[#c6d8dc]"><svg viewBox="0 0 8 8" className="size-[6px]" aria-hidden="true"><path d="M1 4l2 3 4-6" fill="none" stroke="#fff" /></svg></button>
          <button type="button" aria-label="Reject" className="flex size-2 items-center justify-center bg-[#a9bcc0] text-white"><Close /></button>
        </Step>
        <div className="flex flex-col gap-[3px] pb-[7px] pl-1 pt-[3px]">
          <div className="flex h-[14px] items-center">
            <label htmlFor="pick" className="w-[39px]">Select:</label>
            <span className="relative flex items-center">
              <select id="pick" className="h-[14px] w-[70px] appearance-none border border-[#aaa] bg-[#e4e4e4] pl-[2px]"><option>Edge/Corner</option></select>
              <svg viewBox="0 0 8 6" className="pointer-events-none absolute right-[2px] h-[5px] w-[6px]" aria-hidden="true"><path d="M1 1l3 3 3-3" fill="none" stroke="#333" /></svg>
            </span>
          </div>
          <div className="flex h-[14px] items-center">
            <label htmlFor="radius" className="w-[39px]">Radius:</label>
            <input id="radius" defaultValue="130.00 mm" autoFocus onFocus={(e) => e.target.select()} className="h-[13px] w-[60px] border border-[#2a7fc4] bg-white pl-[1px] outline-none selection:bg-[#0078d7] selection:text-white" />
          </div>
        </div>
        <Step icon="soften" text="Soften Corner Step" tone="bg-[#f0f1f0] text-[#999]" />
        <Step text="Shape" tone="bg-[#cde4e4]" />
      </div>
      <div className="pointer-events-none absolute left-[53px] top-[82px] size-8 rounded-full bg-[#fff200] mix-blend-multiply" />
      <svg viewBox="0 0 12 18" className="pointer-events-none absolute left-[69px] top-[93px] h-[15px] w-[10px]" aria-hidden="true"><path d="M1 1v13l3-3 2 5 2-1-2-5h4z" fill="#fff" stroke="#555" strokeWidth=".6" /></svg>
    </section>
  );
}

function Canvas() {
  return (
    <main className="relative min-w-0 flex-1 overflow-hidden bg-linear-to-b from-[#8f938f] via-[#c9ccc8] via-50% to-[#fdfefc]">
      <svg viewBox="231 150 1029 519" className="absolute inset-0 size-full" role="img" aria-label="Protrusion 2">
        <g stroke="#1d2122" strokeWidth=".8" strokeLinejoin="round">
          <path d="M526 238 589 241 783 403 720 400z" fill="#c0ccd1" />
          <path d="M526 238 720 400 703 614 509 454z" fill="#7e8789" />
          <path d="M720 400 783 403 766 617 703 614z" fill="#7e8789" />
        </g>
        <g stroke="#999" strokeWidth=".8" strokeLinejoin="round">
          <path d="M1197 606 1227 603 1242 612 1209 616z" fill="#f4f4f4" />
          <path d="M1197 606 1209 616V650L1197 637z" fill="#e9e9e9" />
          <path d="M1209 616 1242 612 1239 644 1209 650z" fill="#f0f0ef" />
        </g>
        <text x="1213" y="636" fontSize="8" fill="#444" transform="rotate(-5 1213 636)">RIGHT</text>
        <text x="1198" y="625" fontSize="5" fill="#555" transform="rotate(50 1198 625)">FRONT</text>
        <text x="1213" y="609" fontSize="5" fill="#555" transform="rotate(15 1213 609)">TOP</text>
        <path d="M1218 625V610" stroke="#6a6ac8" /><path d="M1218 625l13-2" stroke="#7ddb7d" /><path d="M1218 625l6 5" stroke="#e08080" />
        <circle cx="1218" cy="625" r="2" fill="#b8b84a" />
      </svg>
      <RoundPanel />
    </main>
  );
}

function SideStrip() {
  const button = (n: string) => <button key={n} type="button" aria-label={n} className="flex h-[23px] items-center"><Ico n={n} className="size-[13px]" /></button>;
  return (
    <aside className="-mt-[1px] flex w-5 shrink-0 flex-col items-center bg-[#f7fafa] pl-1">
      {["bodies", "tools", "gauge", "palette"].map(button)}
      <span className="-mt-1 mb-[33px] [writing-mode:vertical-rl]">Style Palette</span>
      {["rainbow", "wrench", "boxdoc", "circles", "greydoc"].map(button)}
    </aside>
  );
}

function StatusBar() {
  return (
    <footer className="shrink-0">
      <div className="flex h-[15px] items-stretch border-t border-[#b8bdbd] bg-[#fdfffd]">
        <div className="flex w-[23px] items-center justify-center bg-[#0b6a89]"><span className="h-[6px] w-3 border border-[#ccd6da] bg-[#87999f]" /></div>
        <p className="flex items-center pl-[2px]">Click on an edge or corner.</p>
      </div>
      <div className="flex h-[14px] items-center justify-end gap-[3px] bg-[#006487] pr-[2px]">
        {["wlens", "wfit", "wdim", "wcube", "boxes", "pages", "back", "stack1", "stack2"].map((n) => <button key={n} type="button" aria-label={n}><Ico n={n} className="size-3" /></button>)}
        <div className="flex items-center gap-[2px]">
          <button type="button" aria-label="Zoom out" className="flex size-[10px] items-center justify-center rounded-full bg-white"><span className="h-[1px] w-[5px] bg-[#c56a20]" /></button>
          <input type="range" aria-label="Zoom" defaultValue={17} className="h-[1px] w-[77px] appearance-none bg-white [&::-webkit-slider-thumb]:h-[7px] [&::-webkit-slider-thumb]:w-[5px] [&::-webkit-slider-thumb]:appearance-none [&::-webkit-slider-thumb]:rounded-b [&::-webkit-slider-thumb]:bg-[#e6eff2]" />
          <button type="button" aria-label="Zoom in" className="flex size-[10px] items-center justify-center rounded-full bg-white leading-none text-[#c56a20]">+</button>
        </div>
        <button type="button" aria-label="Record" className="ml-[2px] flex size-[10px] items-center justify-center rounded-full bg-white"><span className="size-[5px] rounded-full bg-[#b01c2c]" /></button>
      </div>
    </footer>
  );
}

export default function App() {
  return (
    <div className="flex h-screen flex-col overflow-hidden bg-black pb-[22px] pt-[19px] font-[Lato,sans-serif] text-[8px] leading-[10px] text-[#111]">
      <Header />
      <Ribbon />
      <Commands />
      <div className="flex min-h-0 flex-1">
        <div className="flex min-w-0 flex-1 flex-col">
          <DocTabs />
          <div className="flex min-h-0 flex-1 bg-[#fcfefc]">
            <PathFinder />
            <Canvas />
          </div>
        </div>
        <SideStrip />
      </div>
      <StatusBar />
    </div>
  );
}
